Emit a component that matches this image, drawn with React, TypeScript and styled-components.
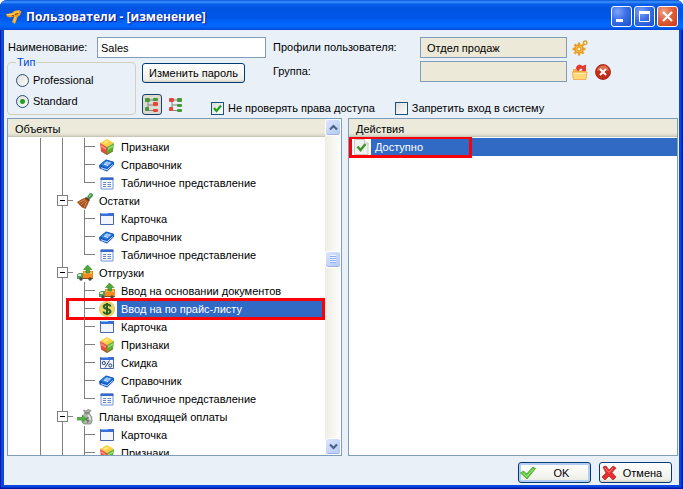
import React, { useState } from 'react';
import styled, { createGlobalStyle, css } from 'styled-components';

const GlobalStyle = createGlobalStyle`
  * { box-sizing: border-box; }
  body { margin: 0; background: #fff; }
  body, button, input { font: 11px/14px "Liberation Sans", Arial, sans-serif; color: #000; }
`;

const Window = styled.div`
  display: flex;
  flex-direction: column;
  height: 100vh;
  padding: 0 4px 4px;
  border-radius: 7px 7px 0 0;
  overflow: hidden;
  background: #0a48e0;
  box-shadow: inset 1px -1px 0 #0019a8, inset -1px -1px 0 #0019a8, inset 0 -2px 0 #0630c8, inset -2px 0 0 #0630c8;
`;

const TitleBar = styled.header`
  display: flex;
  align-items: center;
  flex: none;
  height: 30px;
  margin: 0 -4px;
  padding: 3px 5px 0 6px;
  background: linear-gradient(#0a52dc 0, #3c94ff 2px, #0a5ee8 4px, #0054e3 9px, #0057e8 18px, #0168ff 24px, #0165fc 27px, #0048d0 30px);
`;

const Title = styled.h1`
  flex: 1;
  margin: 0 0 0 4px;
  font: bold 12px/18px "Open Sans", "Trebuchet MS", sans-serif;
  color: #fff;
  text-shadow: 1px 1px 1px #0f1089;
`;

const CaptionButton = styled.button<{ $danger?: boolean }>`
  display: flex;
  width: 21px;
  height: 21px;
  margin-left: 2px;
  padding: 0;
  border: 1px solid #fff;
  border-radius: 3px;
  background: ${p => p.$danger
    ? 'radial-gradient(circle at 30% 25%, #f0a088 0, #e2603c 45%, #c83a14 100%)'
    : 'radial-gradient(circle at 30% 25%, #7ea4f6 0, #3a6ee8 45%, #1c4ed0 100%)'};
`;

const Client = styled.main`
  display: flex;
  flex-direction: column;
  flex: 1;
  min-height: 0;
  padding: 7px 1px 2px 3px;
  background: #e9f0f8;
`;

const Form = styled.form`
  display: grid;
  grid-template-columns: 129px 124px 1fr;
  grid-template-rows: 21px 21px 30px;
  grid-template-areas:
    "name name profile"
    "type password group"
    "type tools tools";
  gap: 3px 6px;
  flex: none;
  margin-bottom: 3px;
`;

const NameField = styled.div`
  grid-area: name;
  display: grid;
  grid-template-columns: 90px 1fr;
  align-items: center;
`;

const LookupField = styled.div<{ $area: string }>`
  grid-area: ${p => p.$area};
  display: grid;
  grid-template-columns: 148px 147px auto auto;
  justify-content: start;
  align-items: center;
`;

const FieldLabel = styled.label`
  padding: 0 0 2px 1px;
`;

const TextInput = styled.input`
  width: 100%;
  height: 21px;
  padding: 0 3px;
  border: 1px solid #7f9db9;
  background: #fff;
  &:read-only {
    padding: 0 6px;
    background: #ece9d8;
  }
`;

const IconButton = styled.button`
  display: flex;
  padding: 0;
  border: 0;
  background: none;
  margin-left: 5px;
  & + & { margin-left: 7px; }
`;

const ViewButton = styled.button<{ $pressed?: boolean }>`
  display: flex;
  align-items: center;
  justify-content: center;
  width: 20px;
  height: 21px;
  margin-right: 4px;
  padding: 0;
  border: 1px solid ${p => (p.$pressed ? '#1c3d68' : 'transparent')};
  border-radius: 3px;
  background: ${p => (p.$pressed ? '#dcdbd2' : 'none')};
`;

const TypeGroup = styled.fieldset`
  grid-area: type;
  display: flex;
  flex-direction: column;
  gap: 7px;
  min-width: 0;
  margin: -5px 0 0;
  padding: 4px 8px 0;
  border: 1px solid #d0d0bf;
  border-radius: 4px;
`;

const Legend = styled.legend`
  padding: 0 1px;
  line-height: 13px;
  color: #0046d5;
`;

const Choice = styled.label`
  display: flex;
  align-items: center;
  gap: 4px;
`;

const Radio = styled.input`
  appearance: none;
  width: 13px;
  height: 13px;
  margin: 0;
  border: 1px solid #21507f;
  border-radius: 50%;
  background: linear-gradient(135deg, #dcdcd7, #fff);
  &:checked { background: radial-gradient(circle, #21a121 0 2px, transparent 3px), linear-gradient(135deg, #dcdcd7, #fff); }
`;

const CheckMark = styled.span`
  display: grid;
  width: 13px;
  height: 13px;
  input, svg { grid-area: 1 / 1; }
  svg { display: none; pointer-events: none; }
  input:checked + svg { display: block; }
`;

const Checkbox = styled.input`
  appearance: none;
  width: 13px;
  height: 13px;
  margin: 0;
  border: 1px solid #1c5180;
  background: linear-gradient(135deg, #dcdcd7, #fff);
`;

const raised = css`
  border: 1px solid #003c74;
  border-radius: 3px;
  background: linear-gradient(#fff, #f0f0ea 85%, #d6d0c5);
`;

const PasswordButton = styled.button`
  ${raised}
  grid-area: password;
  width: 103px;
  height: 20px;
  margin-top: 2px;
  padding: 0;
  white-space: nowrap;
`;

const Tools = styled.div`
  grid-area: tools;
  display: flex;
  align-items: flex-end;
`;

const Checks = styled.div`
  display: flex;
  gap: 20px;
  margin-left: 21px;
`;

const Panels = styled.div`
  display: grid;
  grid-template-columns: 335fr 330fr;
  gap: 6px;
  flex: 1;
  min-height: 0;
`;

const Panel = styled.section`
  display: flex;
  min-width: 0;
  min-height: 0;
  border: 1px solid #7f9db9;
  background: #fff;
`;

const PanelMain = styled.div`
  display: flex;
  flex-direction: column;
  flex: 1;
  min-width: 0;
`;

const PanelTitle = styled.h2`
  flex: none;
  height: 18px;
  margin: 0;
  padding: 3px 7px 0;
  border-bottom: 1px solid #cbc7b8;
  background: linear-gradient(#ebeadb 14px, #d6d2c2);
  font: inherit;
`;

const List = styled.ul`
  flex: 1;
  min-height: 0;
  margin: 0;
  padding: 1px 0 0;
  overflow: hidden;
  list-style: none;
`;

const Row = styled.li`
  position: relative;
  display: flex;
  align-items: center;
  height: 18px;
  white-space: nowrap;
`;

const TreeRow = styled(Row)`
  padding-left: 21px;
`;

const Guide = styled.span<{ $branch?: 'mid' | 'last' }>`
  flex: none;
  width: 22px;
  height: 18px;
  background:
    linear-gradient(#808080, #808080) 11px 0 / 1px ${p => (p.$branch === 'last' ? 9 : 18)}px no-repeat
    ${p => p.$branch && css`, linear-gradient(#808080, #808080) 11px 8px / 12px 1px no-repeat`};
`;

const Joint = styled(Guide)`
  background:
    linear-gradient(#808080, #808080) 11px 0 / 1px 18px no-repeat,
    linear-gradient(#808080, #808080) 11px 8px / 12px 1px no-repeat;
`;

const Expander = styled.button`
  display: flex;
  width: 11px;
  height: 11px;
  margin: 3px 6px;
  padding: 0;
  border: 1px solid #808080;
  background: linear-gradient(#000, #000) 2px 4px / 5px 1px no-repeat #fff;
`;

const RowIcon = styled.span`
  display: flex;
  flex: none;
  width: 16px;
  margin: 0 2px 0 4px;
`;

const RowText = styled.span<{ $selected?: boolean }>`
  padding: 1px 4px;
  line-height: 14px;
  ${p => p.$selected && css`
    flex: 1;
    height: 18px;
    padding-top: 2px;
    background: #316ac5;
    color: #fff;
  `}
`;

const Highlight = styled.span<{ $left: number; $width: string }>`
  position: absolute;
  top: -2px;
  bottom: -2px;
  left: ${p => p.$left}px;
  width: ${p => p.$width};
  border: 3px solid #fb0007;
`;

const ScrollBar = styled.div`
  display: flex;
  flex-direction: column;
  align-items: center;
  flex: none;
  width: 16px;
  background: linear-gradient(90deg, #eeede5, #fefefb);
`;

const Track = styled.div`
  display: flex;
  flex-direction: column;
  flex: 1;
  &::before { content: ""; flex: 116; }
  &::after { content: ""; flex: 171; }
`;

const ScrollButton = styled.button`
  display: flex;
  align-items: center;
  justify-content: center;
  width: 16px;
  height: 17px;
  padding: 0;
  border: 1px solid #fff;
  border-radius: 3px;
  background: linear-gradient(135deg, #dbe5fe, #b4c8f6);
  box-shadow: inset 0 -1px 0 #9cb4e8;
`;

const Footer = styled.footer`
  display: flex;
  justify-content: flex-end;
  gap: 8px;
  flex: none;
  padding: 6px 6px 0;
`;

const ActionButton = styled.button<{ $primary?: boolean }>`
  ${raised}
  display: flex;
  align-items: center;
  width: 73px;
  height: 21px;
  padding: 0 3px 0 1px;
  ${p => p.$primary && css`box-shadow: inset 0 0 0 2px #b4cdf2;`}
`;

const ActionText = styled.span`
  flex: 1;
  text-align: center;
`;

const Svg = ({ children, size = 16 }: { children: React.ReactNode; size?: number }) => (
  <svg width={size} height={size} viewBox={`0 0 ${size} ${size}`} aria-hidden="true">{children}</svg>
);

const Cube = () => (
  <Svg>
    <path d="M8 0 15 4 8 8 1 4Z" fill="#f8d040" />
    <path d="M1 4 8 8V16L2 12Z" fill="#e84c3c" />
    <path d="M15 4 8 8V16L14 12Z" fill="#58b030" />
    <path d="M4 4 8 1.5 10 3 6 5Z" fill="#ffe888" />
    <path d="M2 6 7 9V11L2 8Z" fill="#f89078" />
    <path d="M14 6 9 9V11L14 8Z" fill="#a0d868" />
    <path d="M2 12 8 15.5 14 12" fill="none" stroke="#8a5a28" strokeWidth=".8" />
  </Svg>
);

const Book = () => (
  <Svg>
    <path d="M0 8.5 7 2.5 15 5V8L8 14.500 .5 11.500Z" fill="#1458c4" />
    <path d="M2 10.200 8 12.300 14 7V8L8 13.300 2 11.200Z" fill="#dcecff" />
    <path d="M.8 8 7 3 14.500 5.200 8 11Z" fill="#2f82ec" stroke="#0c50b8" strokeWidth=".6" />
    <path d="M4.500 7.300 7.800 4.600 12 5.800 8.500 9Z" fill="#e4f0ff" />
    <path d="m6 6.200 4 1.300M7.500 5.200l3.500 1.200M7 8.300 10 5.500" stroke="#5c94dc" strokeWidth=".6" />
  </Svg>
);

const Frame = () => (
  <>
    <path d="M1 2H15V14H1Z" fill="#f2f5fb" />
    <path d="M1 2H15V5H1Z" fill="#3c6ed8" />
    <path d="M2 2.500H9" stroke="#86b4ff" />
    <path d="M1.500 2V13.500H14.500V2" fill="none" stroke="#4a68ac" />
  </>
);

const Card = () => <Svg><Frame /></Svg>;
const Percent = () => (
  <Svg>
    <Frame />
    <path d="m6 12.500 4.500-7" stroke="#283c70" />
    <circle cx="4.800" cy="8" r="1.600" fill="none" stroke="#283c70" />
    <circle cx="11.300" cy="10.500" r="1.600" fill="none" stroke="#283c70" />
  </Svg>
);
const Table = () => (
  <Svg>
    <path d="M2 3H14V14H2Z" fill="#f4f7fd" stroke="#7898d0" />
    <path d="M1.500 2.500H14.500V5H1.500Z" fill="#3868c8" />
    <path d="M4 7.500H7M4 9.500H7M4 11.500H7M8.500 7.500H12M8.500 9.500H12M8.500 11.500H12" stroke="#6488d0" />
  </Svg>
);

const Broom = () => (
  <Svg>
    <path d="m10 4 2.500-3.500q2-1 3 .5T15 4L12 7Z" fill="#3f9450" />
    <path d="m12 3.500 2-2" stroke="#98cc98" strokeWidth="1.500" />
    <path d="M0 9 5 6 9 4.500 12.500 7 11 11 8.500 16 5 14.500 2 11.500Z" fill="#a4501f" />
    <path d="M2 9.500 8 6.500M4 12l5-4.500M7 14.500l3-6" stroke="#dc9058" />
    <path d="m8.500 4.500 4 3" stroke="#5c3020" strokeWidth="1.500" />
  </Svg>
);

const Truck = () => (
  <Svg>
    <path d="M6 6H16V13H6Z" fill="#f58a1c" />
    <path d="M7 7H15V9H7Z" fill="#ffb14c" />
    <path d="M0 9.500 2 8H6V14H0Z" fill="#58985c" />
    <path d="M1 9.500 2.500 9H4V11H1Z" fill="#d2eed2" />
    <path d="M6 13H16V14H6Z" fill="#9a4810" />
    <circle cx="4" cy="14" r="1.700" fill="#484848" />
    <circle cx="13" cy="14" r="1.700" fill="#484848" />
    <path d="M10.500 0 15 4.500H12.500V8H9V4.500H6.500Z" fill="#4aa838" stroke="#367f30" strokeWidth=".6" />
  </Svg>
);

const Coin = () => (
  <Svg>
    <circle cx="8" cy="8" r="7.600" fill="#f0d868" stroke="#d0b850" strokeWidth=".7" />
    <path d="M11.500 5.500Q11 3.500 8 3.500T4.700 5.700Q4.900 7.300 8 8t3.500 2.500Q11.300 12.700 8 12.700T4.500 10.500M8 2V14" fill="none" stroke="#286028" strokeWidth="2" />
  </Svg>
);

const MoneyBag = () => (
  <Svg>
    <path d="M8 4 6.500 1 9 2 11 .5 14 1.500 12 4Q16 8 15 12T13 15H7Q4 14 5 10T8 4Z" fill="#b0b4ac" stroke="#787c74" strokeWidth=".7" />
    <path d="M8 4H12" stroke="#585c54" />
    <path d="M11 6Q13.500 8 13 11" fill="none" stroke="#e8ebe5" strokeWidth="1.500" />
    <path d="M0 8H5V5.500L10 10 5 14V11.500H0Z" fill="#55a948" />
    <path d="M11.500 9Q9 8.500 9 10t2 1.500-1 2" fill="none" stroke="#3c6038" />
  </Svg>
);

const TreeGlyph = ({ flip }: { flip?: boolean }) => (
  <Svg>
    <path d="M4 3H10M4 3V13.500H10M4 8H10" fill="none" stroke="#808878" />
    <rect x="1" y="1" width="5" height="4" rx="1" fill={flip ? '#e8443c' : '#49983c'} />
    <rect x="9" y={flip ? 1 : 5} width="5" height="4" rx="1" fill={flip ? '#49983c' : '#e8443c'} />
    {flip
      ? <rect x="9" y="7" width="5" height="3" rx="1" fill="#49983c" />
      : <rect x="9" y="1" width="5" height="3" rx="1" fill="#49983c" />}
    <rect x="9" y="12" width="5" height="3" rx="1" fill={flip ? '#49983c' : '#e8443c'} />
    <rect x="1" y="10" width="4" height="4" rx="1" fill={flip ? '#e8443c' : '#49983c'} />
  </Svg>
);

const Gear = () => (
  <Svg>
    <g transform="translate(7 9)">
      <path d="M0-6.500V6.500M-6.500 0H6.500M-4.600-4.600 4.600 4.600M-4.600 4.600 4.600-4.600" stroke="#f0a020" strokeWidth="2.400" />
      <circle r="4" fill="#ffcc48" stroke="#e89820" strokeWidth="1.500" />
      <circle r="2" fill="#fff4d8" stroke="#d88820" />
    </g>
    <circle cx="13.200" cy="2.800" r="1.800" fill="#fff0b8" stroke="#d8a020" strokeWidth="1.300" />
  </Svg>
);

const OpenFolder = () => (
  <Svg>
    <path d="M4 7Q3 1 8 .5L10.500 2 14 .5V7.500H9L10.500 5Q7 3.500 7 8Z" fill="#e43c34" />
    <path d="M1 5H4.500L5.500 7H14V15H1Z" fill="#f0b040" />
    <path d="M0 8H15L14 15.500H1.500Z" fill="#ffd878" stroke="#e8a030" strokeWidth=".7" />
    <path d="M2 9.500H13" stroke="#fff0b8" />
  </Svg>
);

const RemoveIcon = () => (
  <Svg>
    <circle cx="8" cy="8" r="7.500" fill="#c42c18" stroke="#9c2010" strokeWidth=".8" />
    <path d="M2 7Q3 2 8 1.500T14 7Q8 5 2 7Z" fill="#e0704c" />
    <path d="m5 5 6 6M11 5l-6 6" stroke="#fff" strokeWidth="2" />
  </Svg>
);

const GreenCheck = () => (
  <Svg>
    <path d="M.5 8 3.500 6 6.500 9 13 2 15.500 3.500 7 14Z" fill="#5cc83c" stroke="#3c9a28" strokeWidth=".7" />
    <path d="M2.500 8 6.700 11.500 13.500 4" fill="none" stroke="#a8ec80" />
  </Svg>
);

const RedCross = () => (
  <Svg>
    <path d="M2 2 5 1 8 5 12 1 15 3 11 7.500 15 12 12 15 8 11 4 15 1 12 5 8Z" fill="#e43030" stroke="#b81c1c" strokeWidth=".7" />
    <path d="M4 3 8 7.500 12 3" fill="none" stroke="#ff8c80" />
  </Svg>
);

const PageCheck = () => (
  <Svg>
    <path d="M1.500.5H11.500L15 4V15.500H1.500Z" fill="#f0f0f0" stroke="#c8c8c8" />
    <path d="M11.500.5V4H15" fill="#fff" stroke="#c8c8c8" />
    <path d="m4.500 7.500 3 3.500 5-6" fill="none" stroke="#409828" strokeWidth="2.500" />
  </Svg>
);

const AppIcon = () => (
  <Svg>
    <path d="M0 5 6 4 8 2 13 1 15.500 2.500 14 6 11.500 8 9 15 6 13 8 7.500 4 8.500 1 7.500Z" fill="#f5a020" />
    <path d="M1 5.800 7 5.200 10 3H13" fill="none" stroke="#ffe070" />
    <path d="m6 6.500 2 .5M9 5.500l3-1" stroke="#7c3c08" />
    <path d="m9.500 8-1.500 5" stroke="#ffd860" />
  </Svg>
);

const Chevron = ({ up }: { up?: boolean }) => (
  <svg width="9" height="7" viewBox="0 0 9 7" aria-hidden="true">
    <path d={up ? 'M1 5.500 4.500 2 8 5.500' : 'M1 1.500 4.500 5 8 1.500'} fill="none" stroke="#4d6185" strokeWidth="2.200" />
  </svg>
);

type Item = { text: string; icon: React.ComponentType; level: 2 | 3; last?: boolean };

const items: Item[] = [
  { text: 'Признаки', icon: Cube, level: 3 },
  { text: 'Справочник', icon: Book, level: 3 },
  { text: 'Табличное представление', icon: Table, level: 3, last: true },
  { text: 'Остатки', icon: Broom, level: 2 },
  { text: 'Карточка', icon: Card, level: 3 },
  { text: 'Справочник', icon: Book, level: 3 },
  { text: 'Табличное представление', icon: Table, level: 3, last: true },
  { text: 'Отгрузки', icon: Truck, level: 2 },
  { text: 'Ввод на основании документов', icon: Truck, level: 3 },
  { text: 'Ввод на по прайс-листу', icon: Coin, level: 3 },
  { text: 'Карточка', icon: Card, level: 3 },
  { text: 'Признаки', icon: Cube, level: 3 },
  { text: 'Скидка', icon: Percent, level: 3 },
  { text: 'Справочник', icon: Book, level: 3 },
  { text: 'Табличное представление', icon: Table, level: 3, last: true },
  { text: 'Планы входящей оплаты', icon: MoneyBag, level: 2 },
  { text: 'Карточка', icon: Card, level: 3 },
  { text: 'Признаки', icon: Cube, level: 3 },
];

const SELECTED = 9;

const CheckField = ({ label, initial }: { label: string; initial?: boolean }) => (
  <Choice>
    <CheckMark>
      <Checkbox type="checkbox" defaultChecked={initial} />
      <Svg size={13}><path d="m3 6 2.500 3L10 3.500" fill="none" stroke="#21a121" strokeWidth="2.200" /></Svg>
    </CheckMark>
    {label}
  </Choice>
);

export default function App() {
  const [kind, setKind] = useState('Standard');
  return (
    <>
      <GlobalStyle />
      <Window>
        <TitleBar>
          <AppIcon />
          <Title>Пользователи - [изменение]</Title>
          <CaptionButton aria-label="Свернуть">
            <Svg size={19}><path d="M4 13.500H11" stroke="#fff" strokeWidth="3" /></Svg>
          </CaptionButton>
          <CaptionButton aria-label="Развернуть">
            <Svg size={19}>
              <path d="M4.500 5V14.500H14.500V5" fill="none" stroke="#fff" />
              <path d="M4 5.500H15" stroke="#fff" strokeWidth="3" />
            </Svg>
          </CaptionButton>
          <CaptionButton aria-label="Закрыть" $danger>
            <Svg size={19}><path d="m5 5 9 9M14 5l-9 9" stroke="#fff" strokeWidth="2.200" /></Svg>
          </CaptionButton>
        </TitleBar>
        <Client>
          <Form onSubmit={e => e.preventDefault()}>
            <NameField>
              <FieldLabel htmlFor="name">Наименование:</FieldLabel>
              <TextInput id="name" defaultValue="Sales" />
            </NameField>
            <LookupField $area="profile">
              <FieldLabel htmlFor="profile">Профили пользователя:</FieldLabel>
              <TextInput id="profile" readOnly value="Отдел продаж" />
              <IconButton type="button" aria-label="Настроить профили"><Gear /></IconButton>
            </LookupField>
            <TypeGroup>
              <Legend>Тип</Legend>
              {['Professional', 'Standard'].map(k => (
                <Choice key={k}>
                  <Radio type="radio" name="kind" checked={kind === k} onChange={() => setKind(k)} />
                  {k}
                </Choice>
              ))}
            </TypeGroup>
            <PasswordButton type="button">Изменить пароль</PasswordButton>
            <LookupField $area="group">
              <FieldLabel htmlFor="group">Группа:</FieldLabel>
              <TextInput id="group" readOnly value="" />
              <IconButton type="button" aria-label="Выбрать группу"><OpenFolder /></IconButton>
              <IconButton type="button" aria-label="Очистить группу"><RemoveIcon /></IconButton>
            </LookupField>
            <Tools>
              <ViewButton type="button" aria-label="Дерево" $pressed><TreeGlyph /></ViewButton>
              <ViewButton type="button" aria-label="Структура"><TreeGlyph flip /></ViewButton>
              <Checks>
                <CheckField label="Не проверять права доступа" initial />
                <CheckField label="Запретить вход в систему" />
              </Checks>
            </Tools>
          </Form>
          <Panels>
            <Panel>
              <PanelMain>
                <PanelTitle>Объекты</PanelTitle>
                <List>
                  {items.map((item, i) => {
                    const Icon = item.icon;
                    return (
                      <TreeRow key={i}>
                        <Guide />
                        {item.level === 2
                          ? <Joint><Expander aria-label="Свернуть ветвь" /></Joint>
                          : <><Guide /><Guide $branch={item.last ? 'last' : 'mid'} /></>}
                        <RowIcon><Icon /></RowIcon>
                        <RowText $selected={i === SELECTED}>{item.text}</RowText>
                        {i === SELECTED && <Highlight $left={58} $width="calc(100% - 58px)" />}
                      </TreeRow>
                    );
                  })}
                </List>
              </PanelMain>
              <ScrollBar>
                <ScrollButton aria-label="Вверх"><Chevron up /></ScrollButton>
                <Track>
                  <ScrollButton aria-label="Полоса прокрутки">
                    <Svg size={9}>
                      <path d="M1 1.500H7M1 3.500H7M1 5.500H7M1 7.500H7" stroke="#8cb0f8" />
                      <path d="M1 .5H7M1 2.500H7M1 4.500H7M1 6.500H7" stroke="#eef4fe" />
                    </Svg>
                  </ScrollButton>
                </Track>
                <ScrollButton aria-label="Вниз"><Chevron /></ScrollButton>
              </ScrollBar>
            </Panel>
            <Panel>
              <PanelMain>
                <PanelTitle>Действия</PanelTitle>
                <List>
                  <Row>
                    <RowIcon><PageCheck /></RowIcon>
                    <RowText $selected>Доступно</RowText>
                    <Highlight $left={0} $width="123px" />
                  </Row>
                </List>
              </PanelMain>
            </Panel>
          </Panels>
          <Footer>
            <ActionButton $primary><GreenCheck /><ActionText>OK</ActionText></ActionButton>
            <ActionButton><RedCross /><ActionText>Отмена</ActionText></ActionButton>
          </Footer>
        </Client>
      </Window>
    </>
  );
}
